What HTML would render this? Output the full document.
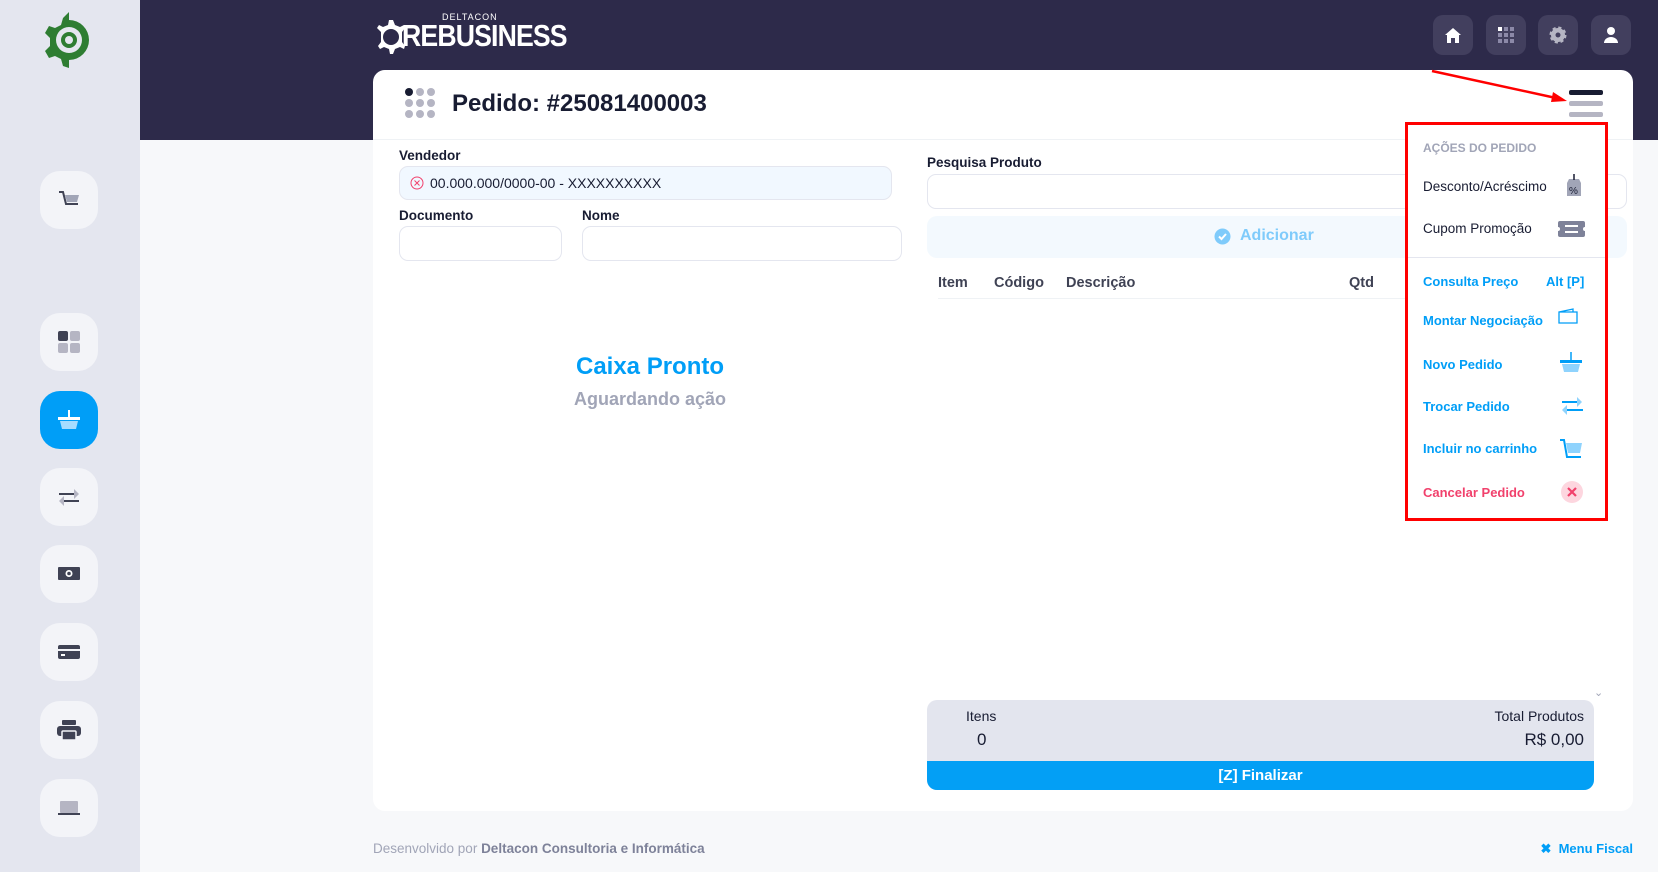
<!DOCTYPE html>
<html><head><meta charset="utf-8"><style>
*{box-sizing:border-box;margin:0;padding:0}
body{width:1658px;height:872px;overflow:hidden;background:#f7f8fa;font-family:"Liberation Sans",sans-serif;position:relative;color:#181c32}
.abs{position:absolute}
.side{left:0;top:0;width:140px;height:872px;background:#e4e6ef}
.sb{left:40px;width:58px;height:58px;border-radius:20px;background:#f3f4f8;display:flex;align-items:center;justify-content:center}
.hdr{left:140px;top:0;width:1518px;height:140px;background:#2d2a4a}
.tb{top:15px;width:40px;height:40px;border-radius:10px;background:#423f5e;display:flex;align-items:center;justify-content:center}
.card{left:373px;top:70px;width:1260px;height:741px;background:#fff;border-radius:12px}
.lbl{font-size:13.5px;font-weight:bold;color:#181c32}
.inp{border:1px solid #e4e6ef;border-radius:9px;background:#fff}
.mi{left:1423px;font-size:13px;color:#009ef7;font-weight:600}
</style></head><body>
<div class="abs side"></div>
<svg class="abs" style="left:44px;top:10px" width="50" height="60" viewBox="0 0 50 60"><path d="M25 2v8a20 20 0 1 1 0 40v8l-6-2-2-7-6-3-6 2-4-7 5-5v-8l-5-5 4-7 6 2 6-3 2-7z" fill="#2e7d32"/><circle cx="25" cy="30" r="13" fill="#e4e6ef"/><circle cx="25" cy="30" r="8" fill="#2e7d32"/><circle cx="25" cy="30" r="4" fill="#e4e6ef"/></svg>
<div class="abs sb" style="top:171px"><svg width="24" height="20"><path d="M2 2h4l3 12h12" stroke="#3f4254" stroke-width="2" fill="none"/><path d="M8 5h14l-2 7H10z" fill="#a1a5b7"/></svg></div>
<div class="abs sb" style="top:313px"><svg width="22" height="22"><rect x="0" y="0" width="10" height="10" rx="2" fill="#3f4254"/><rect x="12" y="0" width="10" height="10" rx="2" fill="#b5b5c3"/><rect x="0" y="12" width="10" height="10" rx="2" fill="#b5b5c3"/><rect x="12" y="12" width="10" height="10" rx="2" fill="#b5b5c3"/></svg></div>
<div class="abs sb" style="top:391px;background:#009ef7"><svg width="24" height="22"><path d="M12 1v8" stroke="#fff" stroke-width="2"/><rect x="1" y="8" width="22" height="3" fill="#fff"/><path d="M3 12h18l-2 8H5z" fill="#a6dcff"/></svg></div>
<div class="abs sb" style="top:468px"><svg width="24" height="18"><path d="M2 6h16" stroke="#3f4254" stroke-width="2"/><path d="M17 1l5 5-5 5z" fill="#b5b5c3"/><path d="M6 13h16" stroke="#3f4254" stroke-width="2"/><path d="M7 8l-5 5 5 5z" fill="#b5b5c3"/></svg></div>
<div class="abs sb" style="top:545px"><svg width="26" height="18"><rect x="2" y="2" width="22" height="13" rx="1" fill="#3f4254"/><circle cx="13" cy="8.5" r="3.5" fill="#fff"/><circle cx="13" cy="8.5" r="1.8" fill="#3f4254"/></svg></div>
<div class="abs sb" style="top:623px"><svg width="24" height="18"><rect x="1" y="2" width="22" height="14" rx="2" fill="#3f4254"/><rect x="1" y="6" width="22" height="2" fill="#f3f4f8"/><rect x="4" y="11" width="4" height="2" fill="#fff"/></svg></div>
<div class="abs sb" style="top:701px"><svg width="26" height="22"><rect x="6" y="1" width="14" height="5" rx="1" fill="#3f4254"/><rect x="1" y="7" width="24" height="10" rx="3" fill="#3f4254"/><rect x="6" y="12" width="14" height="9" rx="1" fill="#3f4254" stroke="#f3f4f8" stroke-width="1.5"/></svg></div>
<div class="abs sb" style="top:779px"><svg width="24" height="16"><rect x="3" y="1" width="18" height="12" rx="1" fill="#b5b5c3"/><rect x="1" y="13" width="22" height="2" fill="#3f4254"/></svg></div>

<div class="abs hdr"></div>
<div class="abs" style="top:12px;color:#fff;font-size:9px;letter-spacing:1px;left:442px">DELTACON</div>
<svg class="abs" style="left:373px;top:19px" width="32" height="36" viewBox="0 0 32 36"><path d="M20 1l2 5 5 2 4-2 1 3-3 4v10l3 4-1 3-4-2-5 2-2 5h-3l-1-5-5-2-4 2-2-3 3-4V13L4 9l2-3 4 2 5-2 1-5z" fill="#fff"/><circle cx="18" cy="18" r="8" fill="#2d2a4a"/></svg>
<div class="abs" style="left:402px;top:18px;color:#fff;font-size:31px;font-weight:bold;letter-spacing:-1px;line-height:36px;transform:scaleX(.86);transform-origin:left">REBUSINESS</div>
<div class="abs tb" style="left:1433px"><svg width="18" height="17"><path d="M9 1l8 7h-2v8h-4v-5H7v5H3V8H1z" fill="#fff"/></svg></div>
<div class="abs tb" style="left:1486px"><svg width="16" height="16" fill="#8c89a8"><rect x="0" y="0" width="4" height="4" fill="#fff"/><rect x="6" y="0" width="4" height="4"/><rect x="12" y="0" width="4" height="4"/><rect x="0" y="6" width="4" height="4"/><rect x="6" y="6" width="4" height="4"/><rect x="12" y="6" width="4" height="4"/><rect x="0" y="12" width="4" height="4"/><rect x="6" y="12" width="4" height="4"/><rect x="12" y="12" width="4" height="4"/></svg></div>
<div class="abs tb" style="left:1538px"><svg width="18" height="18"><circle cx="9" cy="9" r="7" fill="#b5b5c3" stroke="#b5b5c3" stroke-width="3" stroke-dasharray="3 2.5"/><circle cx="9" cy="9" r="2.5" fill="#423f5e"/></svg></div>
<div class="abs tb" style="left:1591px"><svg width="16" height="18"><circle cx="8" cy="5" r="4" fill="#fff"/><path d="M1 17a7 6 0 0 1 14 0z" fill="#fff"/></svg></div>

<div class="abs card"></div>
<div class="abs" style="left:373px;top:139px;width:1260px;height:1px;background:#eff2f5"></div>
<svg class="abs" style="left:405px;top:88px" width="30" height="30"><g fill="#b5b5c3"><circle cx="4" cy="4" r="4" fill="#181c32"/><circle cx="15" cy="4" r="4"/><circle cx="26" cy="4" r="4"/><circle cx="4" cy="15" r="4"/><circle cx="15" cy="15" r="4"/><circle cx="26" cy="15" r="4"/><circle cx="4" cy="26" r="4"/><circle cx="15" cy="26" r="4"/><circle cx="26" cy="26" r="4"/></g></svg>
<div class="abs" style="left:452px;top:90px;font-size:24px;font-weight:bold">Pedido: #25081400003</div>
<div class="abs" style="left:1569px;top:90px;width:34px;height:5px;border-radius:2px;background:#181c32"></div>
<div class="abs" style="left:1569px;top:101px;width:34px;height:5px;border-radius:2px;background:#b5b5c3"></div>
<div class="abs" style="left:1569px;top:112px;width:34px;height:5px;border-radius:2px;background:#b5b5c3"></div>

<div class="abs lbl" style="left:399px;top:148px">Vendedor</div>
<div class="abs inp" style="left:399px;top:166px;width:493px;height:34px;background:#f1f8ff;display:flex;align-items:center;padding-left:10px;font-size:14px;color:#181c32"><svg width="14" height="14" style="margin-right:6px"><circle cx="7" cy="7" r="6" fill="none" stroke="#f1416c"/><path d="M4.5 4.5l5 5M9.5 4.5l-5 5" stroke="#f1416c"/></svg>00.000.000/0000-00 - XXXXXXXXXX</div>
<div class="abs lbl" style="left:399px;top:208px">Documento</div>
<div class="abs lbl" style="left:582px;top:208px">Nome</div>
<div class="abs inp" style="left:399px;top:226px;width:163px;height:35px"></div>
<div class="abs inp" style="left:582px;top:226px;width:320px;height:35px"></div>
<div class="abs" style="left:450px;width:400px;top:353px;text-align:center;font-size:24px;font-weight:bold;color:#009ef7">Caixa Pronto</div>
<div class="abs" style="left:450px;width:400px;top:389px;text-align:center;font-size:18px;font-weight:bold;color:#a1a5b7">Aguardando ação</div>

<div class="abs lbl" style="left:927px;top:155px">Pesquisa Produto</div>
<div class="abs inp" style="left:927px;top:174px;width:700px;height:35px"></div>
<div class="abs" style="left:927px;top:216px;width:700px;height:42px;border-radius:10px;background:#f3f9fe"></div>
<div class="abs" style="left:1214px;top:227px;font-size:16px;font-weight:bold;color:#7fcbfb;display:flex;align-items:center"><svg width="17" height="17" style="margin-right:9px"><circle cx="8.5" cy="8.5" r="8" fill="#7fcbfb"/><path d="M5 8.5l2.5 2.5 4.5-5" stroke="#fff" stroke-width="2" fill="none"/></svg>Adicionar</div>
<div class="abs" style="top:275px;left:938px;font-size:14.5px;font-weight:bold;color:#3f4254">Item</div>
<div class="abs" style="top:275px;left:994px;font-size:14.5px;font-weight:bold;color:#3f4254">Código</div>
<div class="abs" style="top:275px;left:1066px;font-size:14.5px;font-weight:bold;color:#3f4254">Descrição</div>
<div class="abs" style="top:275px;left:1349px;font-size:14.5px;font-weight:bold;color:#3f4254">Qtd</div>
<div class="abs" style="left:938px;top:298px;width:650px;height:1px;background:#eff2f5"></div>
<div class="abs" style="left:1594px;top:686px;font-size:11px;color:#a1a5b7">⌄</div>

<div class="abs" style="left:927px;top:700px;width:667px;height:90px;border-radius:10px;background:#e3e5ee;overflow:hidden">
<div class="abs" style="left:0;top:61px;width:667px;height:29px;background:#039ff5;color:#fff;text-align:center;font-size:15px;font-weight:bold;line-height:29px">[Z] Finalizar</div>
<div class="abs" style="left:39px;top:8px;font-size:14px;color:#181c32">Itens</div>
<div class="abs" style="left:50px;top:30px;font-size:17px;color:#181c32">0</div>
<div class="abs" style="right:10px;top:8px;font-size:14px;color:#181c32">Total Produtos</div>
<div class="abs" style="right:10px;top:30px;font-size:17px;color:#181c32">R$ 0,00</div>
</div>

<div class="abs" style="left:373px;top:841px;font-size:13.5px;color:#a1a5b7">Desenvolvido por <b style="color:#7e8299">Deltacon Consultoria e Informática</b></div>
<div class="abs" style="right:25px;top:841px;font-size:13px;color:#009ef7;font-weight:600">✖&nbsp;&nbsp;Menu Fiscal</div>

<div class="abs" style="left:1405px;top:122px;width:203px;height:399px;border:3px solid #f00;background:#fff"></div>
<div class="abs" style="left:1423px;top:141px;font-size:12px;color:#a1a5b7;font-weight:bold">AÇÕES DO PEDIDO</div>
<div class="abs" style="left:1423px;top:179px;font-size:13.5px;color:#181c32">Desconto/Acréscimo</div>
<svg class="abs" style="left:1566px;top:173px" width="16" height="24"><path d="M3 6h10l2 4v13H1V10z" fill="#a1a5b7"/><path d="M8 1v6" stroke="#181c32" stroke-width="1.5"/><text x="3" y="21" font-size="10" font-family="Liberation Sans" fill="#181c32">%</text></svg>
<div class="abs" style="left:1423px;top:221px;font-size:13.5px;color:#181c32">Cupom Promoção</div>
<svg class="abs" style="left:1558px;top:221px" width="27" height="16"><path d="M2 0h23a2 2 0 0 1 2 2v4a2 2 0 0 0 0 4v4a2 2 0 0 1-2 2H2a2 2 0 0 1-2-2v-4a2 2 0 0 0 0-4V2a2 2 0 0 1 2-2z" fill="#7e8299"/><rect x="7" y="4" width="13" height="2" fill="#fff"/><rect x="7" y="10" width="13" height="2" fill="#fff"/></svg>
<div class="abs" style="left:1408px;top:257px;width:197px;height:1px;background:#e4e6ef"></div>
<div class="abs mi" style="top:274px">Consulta Preço</div>
<div class="abs" style="left:1546px;top:274px;font-size:13px;color:#009ef7;font-weight:600">Alt [P]</div>
<div class="abs mi" style="top:313px">Montar Negociação</div>
<svg class="abs" style="left:1558px;top:308px" width="20" height="16"><path d="M1 4h18v11H1z M1 4l14-3v3" fill="none" stroke="#009ef7" stroke-width="1.3"/></svg>
<div class="abs mi" style="top:357px">Novo Pedido</div>
<svg class="abs" style="left:1560px;top:352px" width="22" height="22"><path d="M11 0v8" stroke="#009ef7" stroke-width="1.5"/><rect x="0" y="8" width="22" height="3" fill="#009ef7"/><path d="M2 12h18l-2 8H4z" fill="#8fd3fd"/></svg>
<div class="abs mi" style="top:399px">Trocar Pedido</div>
<svg class="abs" style="left:1561px;top:396px" width="22" height="20"><path d="M1 6h17" stroke="#009ef7" stroke-width="2"/><path d="M16 1l5 5-5 5z" fill="#8fd3fd"/><path d="M5 14h17" stroke="#009ef7" stroke-width="2"/><path d="M6 9l-5 5 5 5z" fill="#8fd3fd"/></svg>
<div class="abs mi" style="top:441px">Incluir no carrinho</div>
<svg class="abs" style="left:1559px;top:438px" width="24" height="24"><path d="M1 2h4l3 17h14" stroke="#009ef7" stroke-width="2" fill="none"/><path d="M7 5h16l-2 10H9z" fill="#8fd3fd"/></svg>
<div class="abs" style="left:1423px;top:485px;font-size:13px;color:#f1416c;font-weight:600">Cancelar Pedido</div>
<svg class="abs" style="left:1561px;top:481px" width="22" height="22"><circle cx="11" cy="11" r="11" fill="#fdd6df"/><path d="M7 7l8 8M15 7l-8 8" stroke="#f1416c" stroke-width="2.2"/></svg>

<svg class="abs" style="left:0;top:0" width="1658" height="140"><path d="M1432 71L1556 98" stroke="#f00" stroke-width="2.5"/><path d="M1567 101l-14-9-2 10z" fill="#f00"/></svg>
</body></html>
